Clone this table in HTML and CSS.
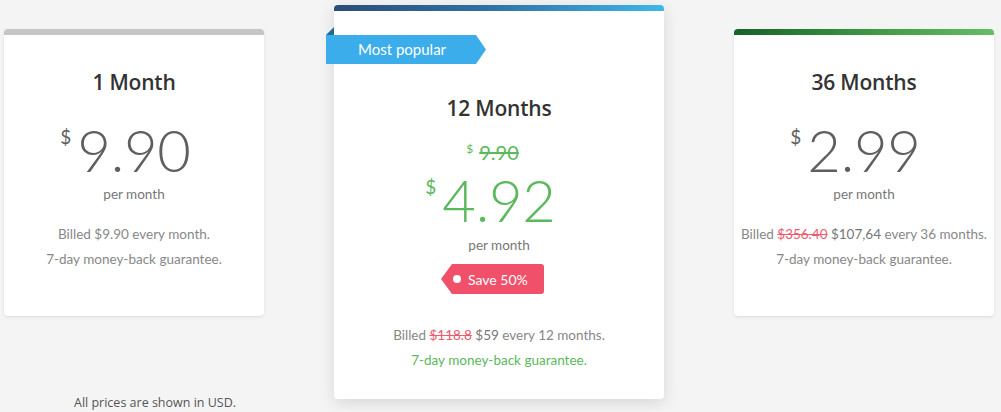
FILE: index.html
```html
<!DOCTYPE html>
<html>
<head>
<meta charset="utf-8">
<link rel="stylesheet" href="styles.css">
</head>
<body>
<div class="plans">
  <div class="col">
    <div class="card side">
      <div class="bar bar-grey"></div>
      <h2 class="title">1 Month</h2>
      <div class="price"><span class="amount"><span class="cur">$</span>9.90</span></div>
      <div class="per">per month</div>
      <div class="info">
        <p>Billed $9.90 every month.</p>
        <p>7-day money-back guarantee.</p>
      </div>
    </div>
    <p class="note">All prices are shown in USD.</p>
  </div>
  <div class="col">
    <div class="card featured">
      <div class="bar bar-blue"></div>
      <div class="ribbon"><span class="fold"></span><span class="ribbon-text">Most popular</span></div>
      <h2 class="title">12 Months</h2>
      <div class="old"><span class="old-amount"><span class="old-cur">$</span><s>9.90</s></span></div>
      <div class="price green"><span class="amount"><span class="cur">$</span>4.92</span></div>
      <div class="per">per month</div>
      <div class="tag-wrap"><span class="tag"><span class="dot"></span>Save 50%</span></div>
      <div class="info info-featured">
        <p>Billed <s class="red">$118.8</s> <span class="dark">$59</span> every 12 months.</p>
        <p class="ok">7-day money-back guarantee.</p>
      </div>
    </div>
  </div>
  <div class="col">
    <div class="card side">
      <div class="bar bar-green"></div>
      <h2 class="title">36 Months</h2>
      <div class="price"><span class="amount"><span class="cur">$</span>2.99</span></div>
      <div class="per">per month</div>
      <div class="info">
        <p>Billed <s class="red">$356.40</s> <span class="dark">$107,64</span> every 36 months.</p>
        <p>7-day money-back guarantee.</p>
      </div>
    </div>
  </div>
</div>
</body>
</html>
```
FILE: styles.css
```css
html, body {
  margin: 0;
  padding: 0;
  background: #f4f4f4;
  font-family: "Lato", "Open Sans", sans-serif;
  overflow: hidden;
}
.plans {
  display: flex;
  align-items: flex-start;
  gap: 70px;
  padding-left: 4px;
}
.col {
  display: flex;
  flex-direction: column;
}
.card {
  position: relative;
  background: #fff;
  border-radius: 4px;
  text-align: center;
  box-sizing: border-box;
}
.side {
  width: 260px;
  height: 287px;
  margin-top: 29px;
  box-shadow: 0 1px 3px rgba(0,0,0,0.10);
}
.featured {
  width: 330px;
  height: 394px;
  margin-top: 5px;
  box-shadow: 0 4px 16px rgba(0,0,0,0.12);
}
.bar {
  height: 6px;
  border-radius: 4px 4px 0 0;
}
.bar-grey { background: #c6c6c6; }
.bar-blue { background: linear-gradient(90deg, #2b4d79 0%, #2f6fa3 45%, #3eb6ea 100%); }
.bar-green { background: linear-gradient(90deg, #17612a 0%, #3d9443 50%, #66bd65 100%); }
.title {
  margin: 0;
  font-family: "Open Sans", sans-serif;
  font-weight: 600;
  font-size: 21px;
  line-height: 28px;
  color: #333;
  letter-spacing: -0.2px;
}
.side .title { margin-top: 33px; }
.featured .title { margin-top: 83px; }
.price {
  display: flex;
  justify-content: center;
  color: #5f5f5f;
}
.side .price { margin-top: 25px; }
.amount {
  position: relative;
  font-family: "Lato", sans-serif;
  font-weight: 300;
  font-size: 58px;
  line-height: 58px;
  letter-spacing: -0.3px;
}
.cur {
  position: absolute;
  right: 100%;
  top: 6px;
  margin-right: 6px;
  font-weight: 400;
  font-size: 19px;
  line-height: 20px;
  letter-spacing: 0;
}
.green { color: #5cb85c; }
.featured .price { margin-top: 7px; }
.old {
  margin-top: 18px;
  color: #5cb85c;
  display: flex;
  justify-content: center;
  height: 24px;
}
.old-amount {
  position: relative;
  font-weight: 400;
  font-size: 20px;
  line-height: 24px;
}
.old-cur {
  position: absolute;
  right: 100%;
  top: 3px;
  margin-right: 6px;
  font-size: 12px;
  line-height: 12px;
}
.per {
  font-size: 13.5px;
  line-height: 18px;
  color: #777;
  margin-top: 6px;
}
.featured .per { margin-top: 7px; }
.info {
  margin-top: 19px;
  font-size: 13.5px;
  color: #888;
}
.info p {
  margin: 0;
  line-height: 25px;
}
.info-featured { margin-top: 29px; }
.red { color: #ee5a6f; }
.dark { color: #777; }
.ok { color: #5cb85c; }
.tag-wrap {
  margin-top: 10px;
  display: flex;
  justify-content: center;
  padding-right: 13px;
}
.tag {
  position: relative;
  display: flex;
  align-items: center;
  height: 30px;
  width: 103px;
  box-sizing: border-box;
  padding-left: 27px;
  background: #f0506a;
  color: #fff;
  font-size: 14px;
  clip-path: polygon(11px 0, 100% 0, 100% 100%, 11px 100%, 0 50%);
  border-radius: 0 3px 3px 0;
}
.dot {
  position: absolute;
  left: 12px;
  top: 11px;
  width: 8px;
  height: 8px;
  border-radius: 50%;
  background: #fff;
}
.ribbon {
  position: absolute;
  left: -8px;
  top: 22px;
  width: 160px;
  height: 37px;
}
.fold {
  position: absolute;
  left: 0;
  top: 0;
  width: 8px;
  height: 8px;
  background: #1f6b9a;
  clip-path: polygon(0 100%, 100% 0, 100% 100%);
}
.ribbon-text {
  position: absolute;
  left: 0;
  top: 8px;
  width: 160px;
  height: 29px;
  box-sizing: border-box;
  padding-left: 32px;
  line-height: 29px;
  background: #3badea;
  color: #fff;
  font-size: 15px;
  clip-path: polygon(0 0, 150px 0, 100% 50%, 150px 100%, 0 100%);
  text-align: left;
}
.note {
  margin: 78px 0 0 70px;
  font-family: "Open Sans", sans-serif;
  font-size: 12.5px;
  color: #555;
}
```
